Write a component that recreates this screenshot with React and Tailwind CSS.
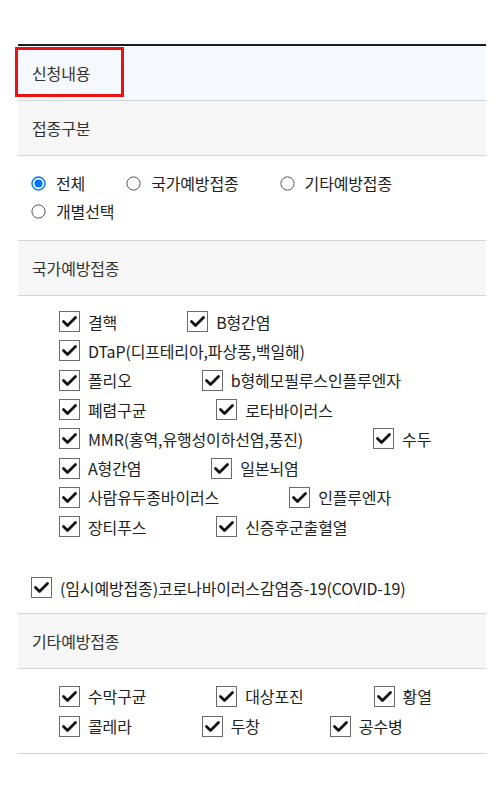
import { useState } from "react";

const FONT = { fontFamily: '"Noto Sans CJK KR", "Noto Sans", sans-serif' };

// national vaccine rows, as they wrap in the reference
const nationalRows = [
  ["결핵", "B형간염"],
  ["DTaP(디프테리아,파상풍,백일해)"],
  ["폴리오", "b형헤모필루스인플루엔자"],
  ["폐렴구균", "로타바이러스"],
  ["MMR(홍역,유행성이하선염,풍진)", "수두"],
  ["A형간염", "일본뇌염"],
  ["사람유두종바이러스", "인플루엔자"],
  ["장티푸스", "신증후군출혈열"],
];

const otherRows = [
  ["수막구균", "대상포진", "황열"],
  ["콜레라", "두창", "공수병"],
];

function CheckBox() {
  return (
    <svg width="21" height="21" viewBox="0 0 21 21" className="shrink-0">
      <rect x="0.5" y="0.5" width="20" height="20" fill="#fff" stroke="#6b6b6b" />
      <path d="M4.5 10.5 L8.5 14.5 L16.5 6.5" fill="none" stroke="#111" strokeWidth="2.8" strokeLinecap="round" strokeLinejoin="round" />
    </svg>
  );
}

function Radio({ checked }) {
  return checked ? (
    <svg width="15" height="15" viewBox="0 0 15 15" className="shrink-0">
      <circle cx="7.5" cy="7.5" r="6.5" fill="#fff" stroke="#0075ff" strokeWidth="1.4" />
      <circle cx="7.5" cy="7.5" r="4" fill="#0075ff" />
    </svg>
  ) : (
    <svg width="15" height="15" viewBox="0 0 15 15" className="shrink-0">
      <circle cx="7.5" cy="7.5" r="6.6" fill="#fff" stroke="#555" strokeWidth="1" />
    </svg>
  );
}

function Item({ label }) {
  return (
    <label className="flex items-center gap-2">
      <CheckBox />
      <span>{label}</span>
    </label>
  );
}

function Header({ children, blue }) {
  return (
    <div className={`flex h-[55px] items-center border-b border-[#d4d4d4] pl-[14px] text-[#333] ${blue ? "bg-[#f5f8fd]" : "bg-[#f6f6f6]"}`}>
      {children}
    </div>
  );
}

export default function App() {
  const [kind, setKind] = useState("all");
  const radios = [
    ["all", "전체"],
    ["national", "국가예방접종"],
    ["other", "기타예방접종"],
  ];

  return (
    <main className="min-h-[797px] bg-white pt-[44px] text-[16px] leading-[22px] tracking-[-0.15px] text-[#222]" style={FONT}>
      <div className="mx-[18px] border-t-2 border-[#1b1b1b]">
        <div className="relative">
          <Header blue>신청내용</Header>
          {/* highlight box */}
          <div className="absolute left-[-3px] top-[1px] h-[50px] w-[109px] border-[3px] border-[#ee1111]" />
        </div>

        <Header>접종구분</Header>

        <div className="border-b border-[#d4d4d4] pb-[15px] pl-[13px] pt-[13px]">
          <div className="flex h-[28px] items-center gap-x-[41px]">
            {radios.map(([key, label]) => (
              <label key={key} className="flex items-center gap-[10px]" onClick={() => setKind(key)}>
                <Radio checked={kind === key} />
                <span>{label}</span>
              </label>
            ))}
          </div>
          <div className="flex h-[28px] items-center">
            <label className="flex items-center gap-[10px]" onClick={() => setKind("pick")}>
              <Radio checked={kind === "pick"} />
              <span>개별선택</span>
            </label>
          </div>
        </div>

        <Header>국가예방접종</Header>

        <div className="border-b border-[#d4d4d4] pb-[15px] pl-[13px] pt-[11px]">
          <div className="pl-[28px]">
            {nationalRows.map((row, i) => (
              <div key={i} className="flex h-[29.3px] items-center gap-x-[70px]">
                {row.map((label) => (
                  <Item key={label} label={label} />
                ))}
              </div>
            ))}
          </div>
          <div className="mt-[36px] flex h-[21px] items-center">
            <Item label="(임시예방접종)코로나바이러스감염증-19(COVID-19)" />
          </div>
        </div>

        <Header>기타예방접종</Header>

        <div className="border-b border-[#d4d4d4] pb-[12px] pl-[41px] pt-[12px]">
          {otherRows.map((row, i) => (
            <div key={i} className="flex h-[30px] items-center gap-x-[70px]">
              {row.map((label) => (
                <Item key={label} label={label} />
              ))}
            </div>
          ))}
        </div>
      </div>
    </main>
  );
}
